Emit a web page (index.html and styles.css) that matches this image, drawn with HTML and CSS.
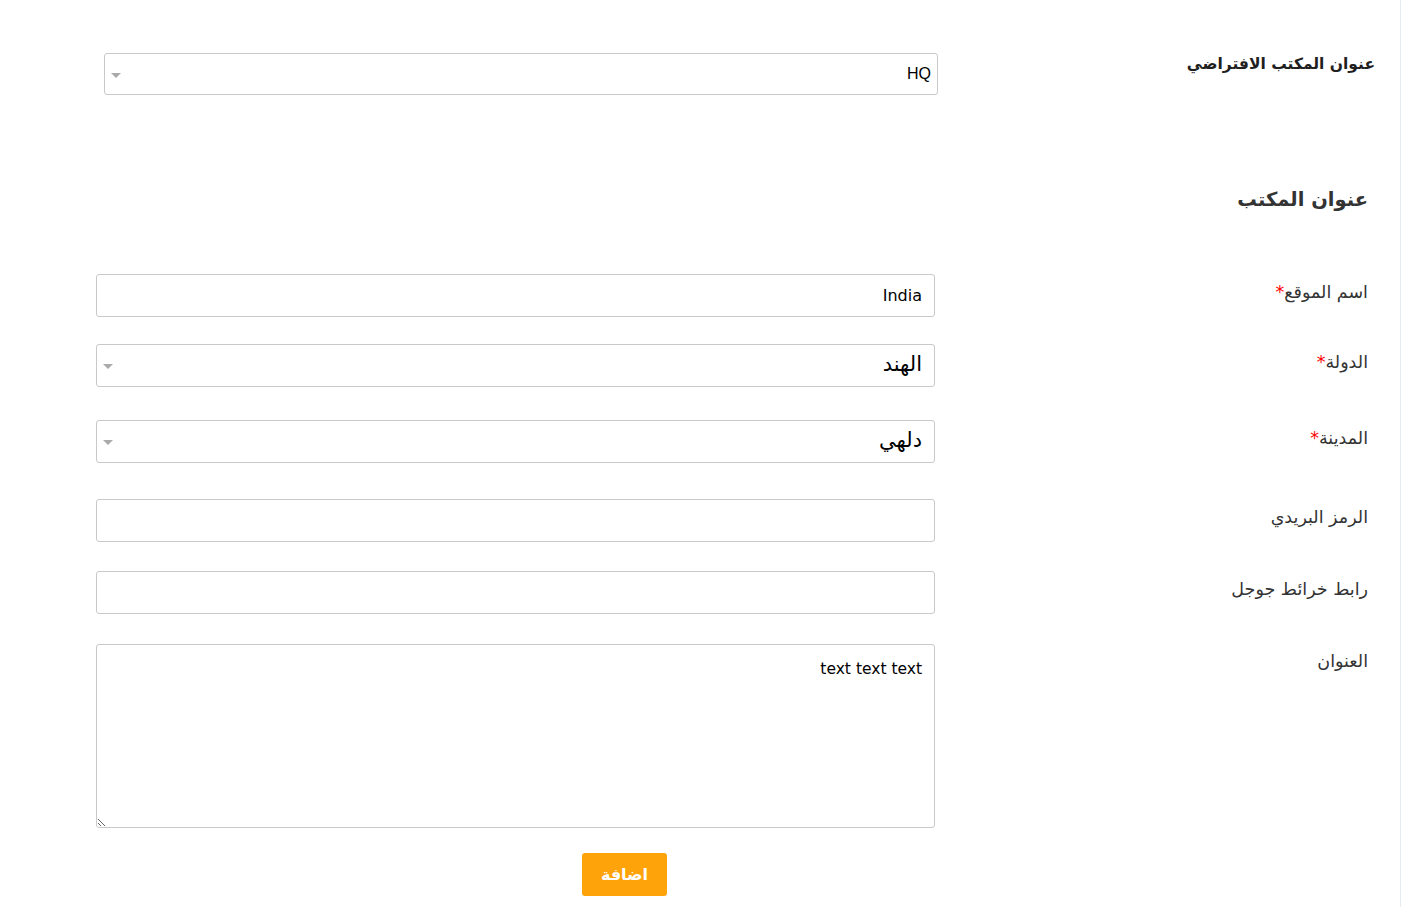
FILE: index.html
```html
<!DOCTYPE html>
<html lang="ar" dir="rtl">
<head>
<meta charset="utf-8">
<link rel="stylesheet" href="styles.css">
</head>
<body>
<div class="page">
  <div class="default-row">
    <label class="default-label">عنوان المكتب الافتراضي</label>
    <div class="select select-default">
      <span class="select-text">HQ</span>
      <span class="arrow"></span>
    </div>
  </div>

  <h2 class="section-title">عنوان المكتب</h2>

  <div class="form">
    <div class="row r1">
      <label class="label">اسم الموقع<span class="req">*</span></label>
      <input class="input" type="text" value="India">
    </div>
    <div class="row r2">
      <label class="label">الدولة<span class="req">*</span></label>
      <div class="select"><span class="select-text sel-ar">الهند</span><span class="arrow"></span></div>
    </div>
    <div class="row r3">
      <label class="label">المدينة<span class="req">*</span></label>
      <div class="select"><span class="select-text sel-ar">دلهي</span><span class="arrow"></span></div>
    </div>
    <div class="row r4">
      <label class="label">الرمز البريدي</label>
      <input class="input" type="text" value="">
    </div>
    <div class="row r5">
      <label class="label">رابط خرائط جوجل</label>
      <input class="input" type="text" value="">
    </div>
    <div class="row r6">
      <label class="label label-ta">العنوان</label>
      <textarea class="textarea">text text text</textarea>
    </div>
    <div class="row r7">
      <span></span>
      <div class="actions"><button class="btn" type="button">اضافة</button></div>
    </div>
  </div>
</div>
</body>
</html>
```

FILE: styles.css
```css
html, body {
  margin: 0;
  padding: 0;
  background: #fff;
}
body {
  font-family: "DejaVu Sans", "Noto Sans", sans-serif;
  color: #333;
}
.page {
  width: 1401px;
  height: 907px;
  margin-left: 0;
  margin-right: auto;
  border-right: 1px solid #e6eaf3;
  box-sizing: border-box;
  background: #fff;
  overflow: hidden;
}
.default-row {
  display: grid;
  grid-template-columns: 1fr 834px;
  padding: 53px 25px 0 104px;
  align-items: start;
}
.default-label {
  font-size: 15.5px;
  font-weight: bold;
  color: #1f1f1f;
  line-height: 22px;
  white-space: nowrap;
}
.select {
  height: 42px;
  border: 1px solid #c9c9c9;
  border-radius: 3px;
  box-sizing: border-box;
  display: flex;
  align-items: center;
  justify-content: space-between;
  padding: 0 6px 0 6px;
  background: #fff;
}
.select-text {
  font-size: 16px;
  color: #000;
  font-family: "Liberation Sans", Arial, sans-serif;
}
.sel-ar {
  font-family: "DejaVu Sans", sans-serif;
  font-size: 21px;
  padding-right: 3px;
  margin-top: -4px;
}
.arrow {
  width: 0;
  height: 0;
  border-left: 5px solid transparent;
  border-right: 5px solid transparent;
  border-top: 5px solid #aaa;
  margin-top: 2px;
}
.section-title {
  margin: 90px 32px 0 0;
  font-size: 19.5px;
  font-weight: bold;
  color: #333;
  line-height: 30px;
}
.form {
  padding: 0 32px 0 96px;
}
.row {
  display: grid;
  grid-template-columns: 1fr 839px;
  align-items: start;
}
.r1 { margin-top: 59px; }
.r2 { margin-top: 27px; }
.r3 { margin-top: 33px; }
.r4 { margin-top: 36px; }
.r5 { margin-top: 29px; }
.r6 { margin-top: 30px; }
.r7 { margin-top: 25px; }
.label {
  font-size: 17.5px;
  line-height: 24px;
  padding-top: 6px;
  color: #333;
  white-space: nowrap;
}
.label-ta {
  padding-top: 5px;
}
.req {
  color: #f00;
}
.input {
  height: 43px;
  width: 100%;
  box-sizing: border-box;
  border: 1px solid #c9c9c9;
  border-radius: 3px;
  padding: 0 12px;
  font-family: "DejaVu Sans", sans-serif;
  font-size: 16px;
  color: #000;
  outline: none;
  direction: rtl;
}
.row .select {
  height: 43px;
  padding-right: 9px;
  padding-left: 6px;
}
.textarea {
  height: 184px;
  width: 100%;
  box-sizing: border-box;
  border: 1px solid #c9c9c9;
  border-radius: 3px;
  padding: 15px 12px;
  font-family: "DejaVu Sans", sans-serif;
  font-size: 15.5px;
  color: #000;
  resize: vertical;
  direction: rtl;
  outline: none;
  display: block;
}
.actions {
  display: flex;
  justify-content: flex-start;
  padding-right: 268px;
}
.btn {
  width: 85px;
  height: 43px;
  background: #ffa30b;
  color: #fff;
  border: none;
  border-radius: 3px;
  font-family: "DejaVu Sans", sans-serif;
  font-size: 16px;
  font-weight: bold;
  cursor: pointer;
}
```
